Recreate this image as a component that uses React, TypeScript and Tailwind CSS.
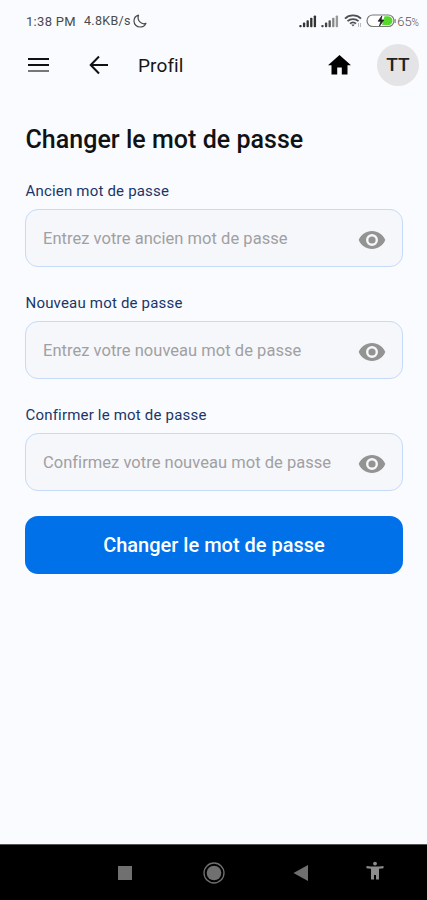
import React from "react";

function SignalBars({ fills }: { fills: string[] }) {
  return (
    <svg width="18" height="13" viewBox="0 0 17 13" preserveAspectRatio="none">
      {fills.map((fill, i) => (
        <rect key={i} x={i * 3.4 + 0.3} y={10 - i * 2.4} width="2.2" height={2.2 + i * 2.4} rx="0.8" fill={fill} />
      ))}
    </svg>
  );
}

function StatusBar() {
  return (
    <div className="flex h-[42px] items-center justify-between pl-[26px] pr-[8px] text-[#555]">
      <div className="flex items-center whitespace-nowrap text-[13px] leading-none text-[#4a4a4a]">
        <span className="w-[58px] tracking-[0.3px]">1:38 PM</span>
        <span className="w-[49px] text-[12.5px] tracking-[0.3px]">4.8KB/s</span>
        <svg width="14" height="14" viewBox="0 0 14 14" fill="none" stroke="#4a4a4a" strokeWidth="1.2" strokeLinejoin="round">
          <path d="M5.5 1.2C2.8 2 1 4.2 1 7a6 6 0 0 0 6 6c2.500 0 4.800-1.300 5.900-3.600C8.500 11 3.700 6.500 5.500 1.200Z" />
        </svg>
      </div>
      <div className="flex items-center">
        <SignalBars fills={["#333", "#333", "#333", "#333", "#333"]} />
        <span className="w-[4px]" />
        <SignalBars fills={["#444", "#444", "#555", "#888", "#999"]} />
        <svg className="ml-[5px]" width="18" height="14" viewBox="0 0 18 14" fill="none" stroke="#505050" strokeWidth="1.8">
          <path d="M1 4.600c4.200-4.200 11.800-4.200 16 0M3.500 7.200c3-2.800 8-2.800 11 0M6 9.700c1.700-1.500 4.300-1.500 6 0" />
          <path d="M7.300 10.500h3.400L9 12.500Z" fill="#505050" stroke="none" />
          <path d="M14.500 9v4M16.500 9v4" stroke="#aaa" strokeWidth="0.8" />
        </svg>
        <svg className="ml-[4px]" width="30" height="14" viewBox="0 0 30 14">
          <rect x="1" y="1" width="27" height="11.500" rx="5.700" fill="#fff" stroke="#777" strokeWidth="1.200" />
          <path d="M18.500 2.300h3.500a4.500 4.500 0 0 1 0 9H16Z" fill="#57d92b" />
          <path d="m15.800 2-3.600 5.200h2.600L13.500 12l4.300-6h-2.700Z" fill="#222" stroke="#222" strokeWidth="0.800" />
          <path d="M29.200 5v4" stroke="#777" />
        </svg>
        <span className="ml-[1px] flex items-baseline leading-none text-[#555]">
          <span className="text-[13px] font-light">65</span>
          <span className="text-[10px] font-light">%</span>
        </span>
      </div>
    </div>
  );
}

function Header() {
  return (
    <header className="flex h-[46px] items-center pl-[26px] pr-[8px]">
      <button aria-label="Menu" className="flex">
        <svg width="25" height="20" viewBox="0 0 25 20" strokeWidth="2">
          <path d="M2 4h21M2 10h21" stroke="#111" />
          <path d="M2 16h21" stroke="#777" />
        </svg>
      </button>
      <button aria-label="Retour" className="ml-[37px] flex">
        <svg width="22" height="20" viewBox="0 0 22 20" fill="none" stroke="#111" strokeWidth="2">
          <path d="M20 10H3M11 1.500 2.700 10l8.300 8.500" />
        </svg>
      </button>
      <span className="ml-[28px] pt-[2px] text-[19px] tracking-[0.1px] text-[#161616]">Profil</span>
      <span className="flex-1" />
      <button aria-label="Accueil" className="flex">
        <svg width="24" height="22" viewBox="0 0 24 22" fill="#000">
          <path d="M12.500 1 1 11.200h3.500V20.500h5.700v-7h4.600v7h5.700v-9.300H24Z" />
        </svg>
      </button>
      <span className="ml-[26px] flex size-[42px] items-center justify-center rounded-full bg-[#e4e4e6] text-[19px] font-medium text-[#222]">
        TT
      </span>
    </header>
  );
}

function PasswordField({ label, placeholder }: { label: string; placeholder: string }) {
  return (
    <label className="flex flex-col">
      <span className="h-[28px] pl-[0.5px] text-[15px] leading-[20px] tracking-[0.19px] text-[#1a3668]">{label}</span>
      <span className="flex h-[58px] items-center rounded-[13px] border-[1.500px] border-[#c6dafa] bg-[#f6f7fb] pl-[17px] pr-[16px]">
        <input
          type="password"
          placeholder={placeholder}
          className="min-w-0 flex-1 bg-transparent pt-[2px] text-[16.500px] tracking-[0.03px] outline-none placeholder:text-[#a0a0a2]"
        />
        <svg className="mt-[4px]" width="28" height="20" viewBox="0 0 28 20" fill="#939393" fillRule="evenodd">
          <path d="M14 1C8 1 3 4.700.700 10 3 15.300 8 19 14 19s11-3.700 13.300-9C25 4.700 20 1 14 1Zm0 15a6 6 0 1 1 0-12 6 6 0 0 1 0 12Zm0-2.400a3.600 3.600 0 1 0 0-7.200 3.600 3.600 0 0 0 0 7.200Z" />
        </svg>
      </span>
    </label>
  );
}

function NavigationBar() {
  return (
    <nav className="flex h-[56px] items-center border-t border-[#555] bg-black pl-[117px] text-[#707070]">
      <svg width="16" height="16" viewBox="0 0 16 16" fill="currentColor">
        <path d="M1 1h14v14H1Z" />
      </svg>
      <svg className="ml-[69px]" width="24" height="24" viewBox="0 0 24 24" fill="currentColor">
        <circle cx="12" cy="12" r="10" fill="none" stroke="currentColor" strokeWidth="1.300" />
        <circle cx="12" cy="12" r="7.300" />
      </svg>
      <svg className="ml-[66px]" width="18" height="18" viewBox="0 0 18 18" fill="currentColor">
        <path d="M16 1v16L1.500 9Z" />
      </svg>
      <svg className="mb-[3px] ml-[55px]" width="20" height="20" viewBox="0 0 20 20" fill="#8c8c8c">
        <circle cx="10" cy="2.600" r="1.900" />
        <path d="M1.500 5c5 .700 12 .700 17 0v2.200c-1.500.300-3 .400-4.500.500V18.500h-3V14H9v4.500H6V7.700C4.500 7.600 3 7.500 1.500 7.200Z" />
      </svg>
    </nav>
  );
}

export default function App() {
  return (
    <div className="flex h-[900px] w-[427px] flex-col bg-[#f9fbfe] font-[Roboto,sans-serif]">
      <StatusBar />
      <Header />
      <main className="flex flex-1 flex-col pl-[25px] pr-[24px] pt-[35px]">
        <h1 className="whitespace-nowrap pl-[0.5px] pt-[1px] text-[25px] font-medium leading-[32px] tracking-[0.03px] text-[#101214]">
          Changer le mot de passe
        </h1>
        <form className="mt-[25px] flex flex-col gap-[26px]">
          <PasswordField label="Ancien mot de passe" placeholder="Entrez votre ancien mot de passe" />
          <PasswordField label="Nouveau mot de passe" placeholder="Entrez votre nouveau mot de passe" />
          <PasswordField label="Confirmer le mot de passe" placeholder="Confirmez votre nouveau mot de passe" />
          <button
            type="button"
            className="-mt-[1px] h-[58px] rounded-[13px] bg-[#0071e9] text-[20px] font-medium text-white"
          >
            Changer le mot de passe
          </button>
        </form>
      </main>
      <NavigationBar />
    </div>
  );
}
